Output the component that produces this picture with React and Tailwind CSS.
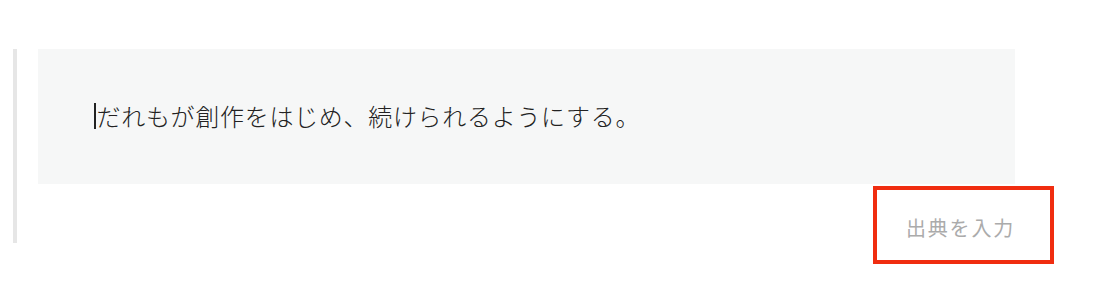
export default function App() {
  const jp = { fontFamily: '"Noto Sans CJK JP", "Noto Sans", sans-serif' };
  return (
    <div className="w-[1094px] h-[308px] bg-white overflow-hidden" style={jp}>
      <div className="ml-[13px] mt-[49px] w-[1002px] border-l-4 border-[#e6e6e6] pl-[21px]">
        <div className="h-[135px] bg-[#f6f7f7] flex items-center pl-[56px] pb-[2px]">
          <span className="inline-block w-[1.5px] h-[26px] bg-[#222] mr-[1px]" />
          <span className="text-[24px] leading-[26px] tracking-[0.7px] text-[#222] font-light">
            だれもが創作をはじめ、続けられるようにする。
          </span>
        </div>
        <div className="h-[59px] flex justify-end items-center">
          <div className="relative mt-[28px]">
            <span className="block text-[20px] leading-[24px] tracking-[1.8px] text-[#ababab]">出典を入力</span>
            <div className="absolute left-[-33px] right-[-39px] top-[-30px] bottom-[-24px] border-[4.5px] border-[#f02d10]" />
          </div>
        </div>
      </div>
    </div>
  );
}
